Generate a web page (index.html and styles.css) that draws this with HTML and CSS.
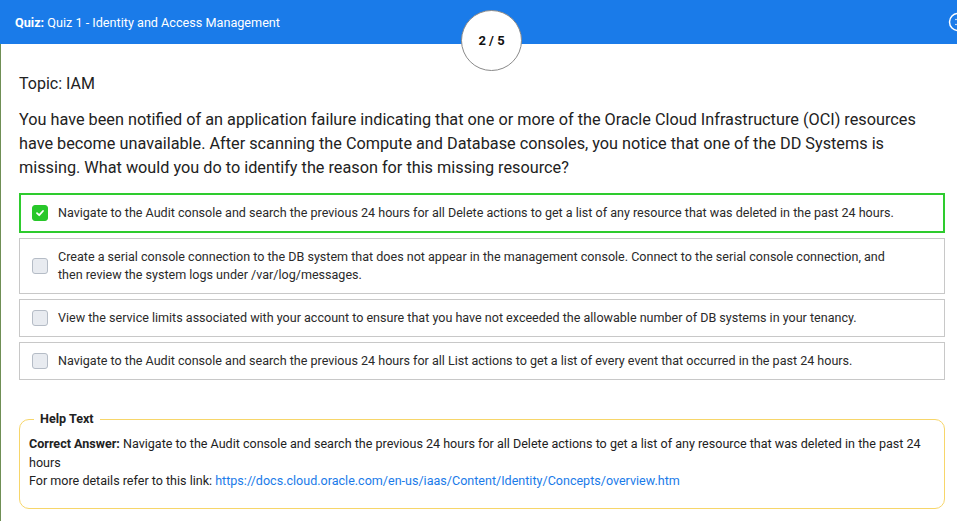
FILE: index.html
```html
<!DOCTYPE html>
<html>
<head>
<meta charset="utf-8">
<link rel="stylesheet" href="styles.css">
</head>
<body>
<div class="page">
  <header class="topbar">
    <div class="title"><b>Quiz:</b> Quiz 1 - Identity and Access Management</div>
    <div class="counter">2 / 5</div>
    <svg class="close" width="20" height="20" viewBox="0 0 20 20"><circle cx="10" cy="10" r="8.5" fill="none" stroke="#fff" stroke-width="1.5"/><path d="M8 7.5 L8 7.5 M8 12.5 L8 12.5" stroke="#fff" stroke-width="1.6" stroke-linecap="round"/></svg>
  </header>
  <main class="content">
    <div class="topic">Topic: IAM</div>
    <p class="question">You have been notified of an application failure indicating that one or more of the Oracle Cloud Infrastructure (OCI) resources have become unavailable. After scanning the Compute and Database consoles, you notice that one of the DD Systems is missing. What would you do to identify the reason for this missing resource?</p>
    <div class="options">
      <div class="option selected">
        <span class="check on"><svg width="10" height="10" viewBox="0 0 10 10"><path d="M2 5.2 L4.2 7.2 L8 3" fill="none" stroke="#fff" stroke-width="1.8" stroke-linecap="round" stroke-linejoin="round"/></svg></span>
        <span class="otext">Navigate to the Audit console and search the previous 24 hours for all Delete actions to get a list of any resource that was deleted in the past 24 hours.</span>
      </div>
      <div class="option">
        <span class="check"></span>
        <span class="otext">Create a serial console connection to the DB system that does not appear in the management console. Connect to the serial console connection, and then review the system logs under /var/log/messages.</span>
      </div>
      <div class="option">
        <span class="check"></span>
        <span class="otext">View the service limits associated with your account to ensure that you have not exceeded the allowable number of DB systems in your tenancy.</span>
      </div>
      <div class="option">
        <span class="check"></span>
        <span class="otext">Navigate to the Audit console and search the previous 24 hours for all List actions to get a list of every event that occurred in the past 24 hours.</span>
      </div>
    </div>
    <fieldset class="help">
      <legend>Help Text</legend>
      <div class="hline"><b>Correct Answer:</b> Navigate to the Audit console and search the previous 24 hours for all Delete actions to get a list of any resource that was deleted in the past 24 hours</div>
      <div class="hline">For more details refer to this link: <a href="#">https://docs.cloud.oracle.com/en-us/iaas/Content/Identity/Concepts/overview.htm</a></div>
    </fieldset>
  </main>
</div>
</body>
</html>
```

FILE: styles.css
```css
html, body {
  margin: 0;
  padding: 0;
  background: #fff;
}
body {
  font-family: Roboto, "Liberation Sans", sans-serif;
  color: #212121;
  width: 957px;
  height: 521px;
  overflow: hidden;
}
.page {
  position: relative;
}
.topbar {
  position: relative;
  height: 44px;
  background: #1a7be9;
  display: flex;
  align-items: center;
  padding-left: 15px;
}
.title {
  color: #fff;
  font-size: 12.65px;
}
.title b {
  font-weight: 700;
}
.counter {
  position: absolute;
  left: 461px;
  top: 10px;
  width: 59px;
  height: 59px;
  border-radius: 50%;
  background: #fff;
  border: 1px solid #8a8a8a;
  display: flex;
  align-items: center;
  justify-content: center;
  font-size: 13px;
  font-weight: 700;
  color: #111;
}
.close {
  position: absolute;
  left: 948px;
  top: 12px;
}
.content {
  border-left: 1px solid #6f8f55;
  padding: 30px 12px 12px 18px;
  height: 447px;
}
.topic {
  font-size: 16px;
  line-height: 20px;
  color: #222;
}
.question {
  margin: 14px 0 13px 0;
  font-size: 16.25px;
  line-height: 24px;
  color: #222;
}
.options {
  display: flex;
  flex-direction: column;
  gap: 5px;
}
.option {
  display: flex;
  align-items: center;
  border: 1px solid #c8c8c8;
  padding: 9px 36px 9px 12px;
  min-height: 18px;
}
.option.selected {
  border: 2px solid #2ecb2e;
  padding: 9px 35px 9px 11px;
}
.check {
  flex: none;
  width: 14px;
  height: 14px;
  border: 1px solid #b5bcc6;
  border-radius: 3px;
  background: #e8ebf0;
  margin-right: 10px;
  display: flex;
  align-items: center;
  justify-content: center;
}
.check.on {
  background: #28c72a;
  border-color: #28c72a;
}
.otext {
  font-size: 12.55px;
  line-height: 18px;
  color: #2a2a2a;
}
.help {
  margin: 31px 0 0 0;
  border: 1px solid #f7d66a;
  border-radius: 10px;
  padding: 8px 10px 17px 9px;
  font-size: 12.55px;
  line-height: 18.5px;
  color: #222;
}
.help legend {
  font-weight: 700;
  padding: 0 6px;
  margin-left: 5px;
  font-size: 12.6px;
  line-height: 16px;
}
.help a {
  color: #1a7be9;
  text-decoration: none;
}
```
